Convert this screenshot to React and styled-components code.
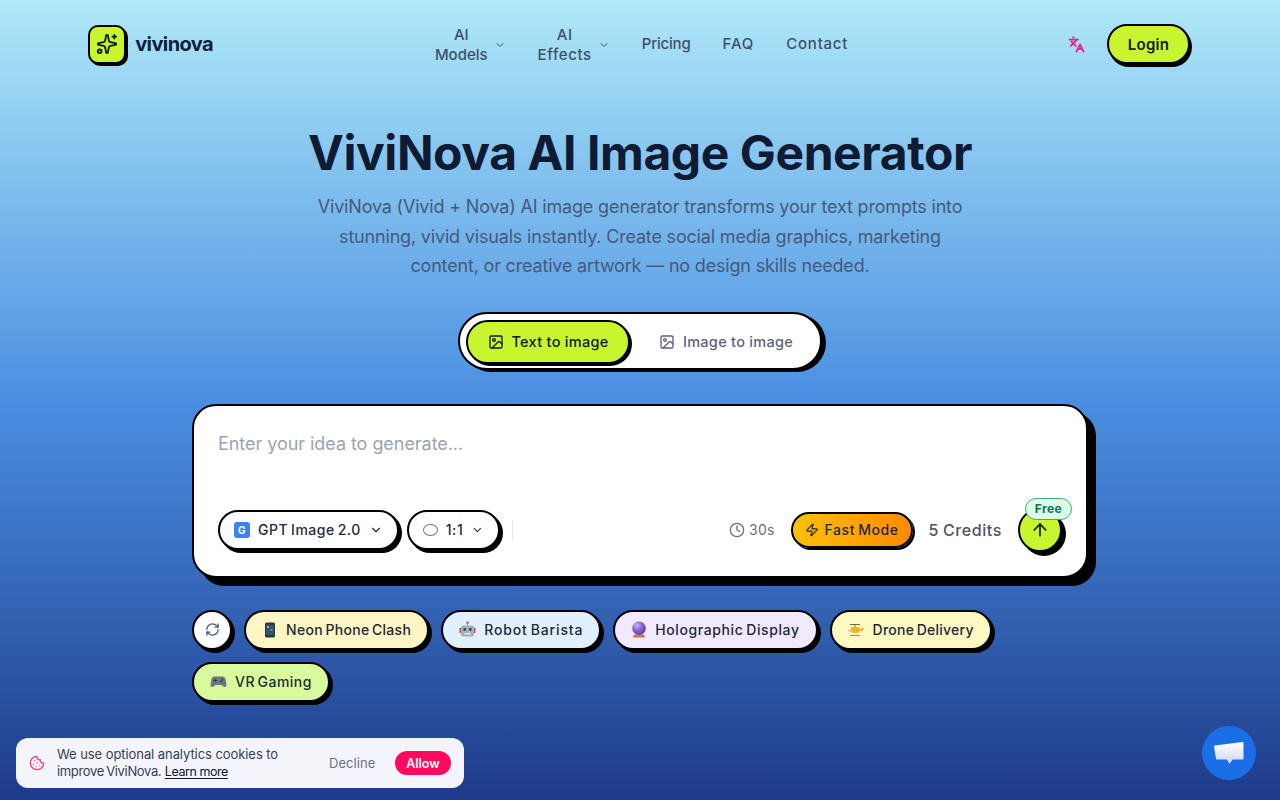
import React from 'react'
import styled, { createGlobalStyle } from 'styled-components'
import { Sparkles, Languages, ChevronDown, Image, Clock, Zap, ArrowUp, RefreshCw, Cookie } from 'lucide-react'

const GlobalStyle = createGlobalStyle`
*{ box-sizing: border-box; }
html, body{ margin: 0; padding: 0; height: 100%; }
body{
  font-family: 'Inter', 'Liberation Sans', sans-serif;
  color: #0f172a;
  overflow: hidden;
}
`

const Page = styled.div`
height: 800px;
overflow: hidden;
background: linear-gradient(180deg, #afe8f8 0%, #4a8fe2 50%, #1e3a8a 100%);
`

const Header = styled.header`
height: 88px;
padding: 0 88px;
display: flex;
align-items: center;
justify-content: space-between;
`

const Brand = styled.div`
display: flex;
align-items: center;
gap: 9px;
width: 125px;
`

const LogoBox = styled.div`
width: 40px;
height: 39px;
border-radius: 10px;
border: 2px solid #000;
box-shadow: 2px 2px 0 #000;
background: #c8f52e;
display: flex;
align-items: center;
justify-content: center;
color: #111827;
`

const BrandName = styled.span`
font-size: 20px;
font-weight: 700;
letter-spacing: -0.6px;
color: #0f1f3d;
`

const Nav = styled.nav`
height: 44px;
display: flex;
align-items: center;
gap: 32px;
margin-left: 3px;
`

const NavItem = styled.a`
display: flex;
align-items: center;
gap: 6px;
margin-top: ${props => props.stacked ? '2px' : '0'};
font-size: 15px;
font-weight: 500;
line-height: 20px;
letter-spacing: ${props => props.spread || '0'};
color: #3f5068;
text-align: center;
`

const Actions = styled.div`
display: flex;
align-items: center;
justify-content: flex-end;
gap: 22px;
width: 125px;
`

const LoginButton = styled.button`
width: 83px;
height: 40px;
margin-right: 2px;
border-radius: 999px;
border: 2px solid #000;
box-shadow: 2px 3px 0 #000;
background: #c8f52e;
font: 600 15px 'Inter', sans-serif;
letter-spacing: 0.3px;
color: #111827;
padding: 0;
`

const Hero = styled.section`
display: flex;
flex-direction: column;
align-items: center;
padding-top: 33px;
`

const Title = styled.h1`
margin: 0;
font-size: 48px;
line-height: 64px;
font-weight: 700;
letter-spacing: -0.42px;
color: #0f1b33;
`

const Lead = styled.p`
margin: 7px 0 0;
width: 672px;
text-align: center;
font-size: 18px;
line-height: 29.5px;
font-weight: 400;
letter-spacing: -0.18px;
color: #46597a;
`

const Tabs = styled.div`
margin-top: 31px;
width: 364px;
height: 58px;
padding: 6px 6px 4px;
border-radius: 999px;
border: 2px solid #000;
box-shadow: 4px 2px 0 #000;
background: #fff;
display: flex;
align-items: flex-start;
gap: 8px;
`

const Tab = styled.button`
height: 44px;
flex: ${props => props.active ? '0 0 164px' : '1'};
display: flex;
align-items: center;
justify-content: center;
gap: 8px;
padding: 0;
border-radius: 999px;
border: ${props => props.active ? '2px solid #000' : '2px solid transparent'};
box-shadow: ${props => props.active ? '2px 2px 0 #000' : 'none'};
background: ${props => props.active ? '#c8f52e' : 'transparent'};
color: ${props => props.active ? '#111827' : '#5b6475'};
font: 500 14.5px 'Inter', sans-serif;
letter-spacing: 0.28px;
`

const Card = styled.div`
margin: 34px auto 0;
width: 896px;
height: 174px;
padding: 24px;
border-radius: 24px;
border: 2px solid #000;
box-shadow: 8px 8px 0 #000;
background: #fff;
display: flex;
flex-direction: column;
justify-content: space-between;
`

const Prompt = styled.div`
font-size: 18px;
line-height: 28px;
letter-spacing: -0.05px;
color: #9ca3af;
`

const Controls = styled.div`
display: flex;
align-items: center;
gap: 8px;
`

const Select = styled.button`
height: 40px;
padding: 0 14px;
width: ${props => props.w}px;
display: flex;
align-items: center;
gap: 8px;
border-radius: 999px;
border: 2px solid #000;
box-shadow: 3px 3px 0 #000;
background: #fff;
font: 500 14px 'Inter', sans-serif;
letter-spacing: 0.55px;
word-spacing: -1.5px;
color: #1f2937;
`

const GBadge = styled.span`
width: 16px;
height: 16px;
border-radius: 3px;
background: #3b82f6;
color: #fff;
font-size: 10px;
font-weight: 700;
display: flex;
align-items: center;
justify-content: center;
`

const SelectText = styled.span`
flex: 1;
text-align: left;
white-space: nowrap;
`

const Oval = styled.span`
width: 16px;
height: 12px;
border-radius: 50%;
border: 1px solid #6b7280;
`

const Divider = styled.span`
width: 1px;
height: 20px;
background: #e5e7eb;
margin-left: 4px;
`

const Spacer = styled.div`
flex: 1;
`

const Timer = styled.span`
display: flex;
align-items: center;
gap: 4px;
font-size: 14px;
letter-spacing: 0.2px;
color: #6b7280;
margin-right: 8px;
`

const FastMode = styled.span`
width: 122px;
height: 36px;
display: flex;
align-items: center;
justify-content: center;
gap: 6px;
border-radius: 999px;
border: 2px solid #000;
box-shadow: 2px 2px 0 #000;
background: linear-gradient(90deg, #ffc107, #ff8a00);
font-size: 14px;
font-weight: 500;
letter-spacing: 0.55px;
word-spacing: -1px;
color: #1f2937;
`

const Credits = styled.span`
margin-left: 8px;
font-size: 16px;
font-weight: 500;
letter-spacing: 0.6px;
word-spacing: -1px;
color: #4b5563;
`

const SendWrap = styled.div`
position: relative;
margin-left: 8px;
`

const SendButton = styled.button`
width: 44px;
height: 44px;
padding: 0;
border-radius: 50%;
border: 2px solid #000;
box-shadow: 4px 4px 0 #000;
background: #c8f52e;
display: flex;
align-items: center;
justify-content: center;
color: #111827;
`

const FreeBadge = styled.span`
position: absolute;
top: -10px;
left: 7px;
width: 47px;
height: 22px;
border-radius: 999px;
border: 1px solid #34b27b;
background: #dcfce7;
color: #047857;
font-size: 12px;
font-weight: 700;
letter-spacing: 0.4px;
display: flex;
align-items: center;
justify-content: center;
`

const Chips = styled.div`
margin: 32px auto 0;
width: 896px;
display: flex;
flex-wrap: wrap;
gap: 12px;
`

const RoundChip = styled.button`
width: 40px;
height: 40px;
padding: 0;
border-radius: 50%;
border: 2px solid #000;
box-shadow: 3px 3px 0 #000;
background: #fff;
display: flex;
align-items: center;
justify-content: center;
color: #4b5563;
`

const Chip = styled.button`
height: 40px;
padding: 0 16px;
display: flex;
align-items: center;
gap: 8px;
border-radius: 999px;
border: 2px solid #000;
box-shadow: 3px 3px 0 #000;
background: ${props => props.bg};
font: 500 14px 'Inter', sans-serif;
letter-spacing: ${props => props.spread};
word-spacing: -1.5px;
color: #1f2937;
white-space: nowrap;
`

const CookieBar = styled.div`
position: fixed;
left: 16px;
bottom: 12px;
width: 448px;
height: 50px;
padding: 0 13px;
border-radius: 12px;
background: #f3f5fb;
display: flex;
align-items: center;
color: #f43f7a;
`

const CookieText = styled.p`
margin: 0 0 0 12px;
width: 259px;
font-size: 13px;
line-height: 17px;
letter-spacing: -0.07px;
color: #374151;
`

const TightLine = styled.span`
letter-spacing: -0.35px;
word-spacing: -1px;
`

const LearnMore = styled.a`
color: #111827;
font-size: 12.5px;
letter-spacing: -0.45px;
text-decoration: underline;
text-underline-offset: 2px;
`

const Decline = styled.span`
margin-left: 13px;
font-size: 13px;
letter-spacing: 0.05px;
color: #6b7280;
`

const Allow = styled.button`
margin-left: auto;
width: 56px;
height: 24px;
padding: 0;
border: none;
border-radius: 999px;
background: #ff0a5c;
color: #fff;
font: 600 12.5px 'Inter', sans-serif;
`

const ChatButton = styled.div`
position: fixed;
left: 1202px;
top: 726px;
width: 54px;
height: 54px;
border-radius: 50%;
background: #1b6fe6;
display: flex;
align-items: center;
justify-content: center;
`

const PhoneIcon = () => (
  <svg width="16" height="16" viewBox="0 0 16 16">
    <rect x="3" y="0.5" width="10" height="15" rx="1.5" fill="#2b3440" />
    <rect x="4" y="2.5" width="8" height="10.5" fill="#35536b" />
    <rect x="5" y="4" width="2" height="2" fill="#e0a030" />
    <rect x="8.5" y="7" width="2" height="2" fill="#4a9bd0" />
  </svg>
)

const RobotIcon = () => (
  <svg width="17" height="17" viewBox="0 0 17 17">
    <rect x="0.5" y="7" width="2" height="5" fill="#d9453d" />
    <rect x="14.5" y="7" width="2" height="5" fill="#d9453d" />
    <circle cx="8.5" cy="1.8" r="1.3" fill="#d9453d" />
    <rect x="8" y="2.5" width="1" height="2.5" fill="#8a9aa5" />
    <rect x="2" y="4.5" width="13" height="11" rx="2" fill="#9fb1bc" />
    <circle cx="5.7" cy="8.5" r="1.4" fill="#3a4750" />
    <circle cx="11.3" cy="8.5" r="1.4" fill="#3a4750" />
    <rect x="5.5" y="12" width="6" height="1.5" fill="#e4ebef" />
  </svg>
)

const BallIcon = () => (
  <svg width="16" height="17" viewBox="0 0 16 17">
    <defs>
      <radialGradient id="ball" cx="0.35" cy="0.3" r="0.8">
        <stop offset="0" stopColor="#c9b5f5" />
        <stop offset="0.5" stopColor="#8a5cd6" />
        <stop offset="1" stopColor="#5b34a8" />
      </radialGradient>
    </defs>
    <path d="M3 13.5h10l1 3H2z" fill="#c4793e" />
    <circle cx="8" cy="7.2" r="6.8" fill="url(#ball)" />
  </svg>
)

const DroneIcon = () => (
  <svg width="17" height="14" viewBox="0 0 17 14">
    <rect x="2" y="1" width="10" height="1" fill="#7a6a30" />
    <rect x="6.5" y="1.5" width="1" height="3" fill="#7a6a30" />
    <path d="M3 4h6c2 0 3 1.5 3 3 0 2-1.5 3-3.5 3H6C4 10 3 8 3 7z" fill="#f0b429" />
    <path d="M11 6l5-1.5L15 8l-4 0z" fill="#f0b429" />
    <path d="M0 8l2-1 1 1.5z" fill="#9a7a20" />
    <rect x="2" y="12" width="10" height="1" fill="#c08a1a" />
  </svg>
)

const PadIcon = () => (
  <svg width="17" height="14" viewBox="0 0 17 14">
    <path d="M4.5 1.5h8c1.8 0 2.6 1 3 2.5l1 5.5c.3 2-1.8 3.3-3.2 2L11.5 10h-6l-1.8 1.5c-1.4 1.3-3.5 0-3.2-2l1-5.5c.4-1.5 1.2-2.5 3-2.5z" fill="#6b7884" />
    <rect x="3.5" y="5" width="3.5" height="1" fill="#2f3740" />
    <rect x="4.75" y="3.75" width="1" height="3.5" fill="#2f3740" />
    <circle cx="12.5" cy="4.5" r="0.9" fill="#2f3740" />
    <circle cx="11" cy="6.5" r="0.9" fill="#2f3740" />
  </svg>
)

const ChatIcon = () => (
  <svg width="32" height="26" viewBox="0 0 32 26">
    <defs>
      <linearGradient id="chat" x1="0" y1="0" x2="0" y2="1">
        <stop offset="0" stopColor="#ffffff" />
        <stop offset="1" stopColor="#cdd6ee" />
      </linearGradient>
    </defs>
    <path d="M2 5.5 29.5 2c.6 0 1 .4 1 1v15.5c0 .6-.4 1-1 1H19.5L16.5 24l-2.500-4.500H4c-.6 0-1-.4-1-1L1 6.500c0-.6.4-1 1-1z" fill="url(#chat)" />
  </svg>
)

const App = () => {
  return (
    <Page>
      <GlobalStyle />
      <Header>
        <Brand>
          <LogoBox><Sparkles size={22} strokeWidth={2} /></LogoBox>
          <BrandName>vivinova</BrandName>
        </Brand>
        <Nav>
          <NavItem stacked><span>AI<br />Models</span><ChevronDown size={12} /></NavItem>
          <NavItem stacked spread="0.6px"><span>AI<br />Effects</span><ChevronDown size={12} /></NavItem>
          <NavItem spread="-0.2px">Pricing</NavItem>
          <NavItem spread="0.9px">FAQ</NavItem>
          <NavItem spread="0.75px">Contact</NavItem>
        </Nav>
        <Actions>
          <Languages size={17} strokeWidth={2.5} color="#e91e8c" />
          <LoginButton>Login</LoginButton>
        </Actions>
      </Header>
      <Hero>
        <Title>ViviNova AI Image Generator</Title>
        <Lead>
          ViviNova (Vivid + Nova) AI image generator transforms your text prompts into stunning, vivid visuals instantly. Create social media graphics, marketing content, or creative artwork — no design skills needed.
        </Lead>
        <Tabs>
          <Tab active><Image size={16} />Text to image</Tab>
          <Tab><Image size={16} />Image to image</Tab>
        </Tabs>
      </Hero>
      <Card>
        <Prompt>Enter your idea to generate...</Prompt>
        <Controls>
          <Select w={181}>
            <GBadge>G</GBadge>
            <SelectText>GPT Image 2.0</SelectText>
            <ChevronDown size={14} />
          </Select>
          <Select w={93}>
            <Oval />
            <SelectText>1:1</SelectText>
            <ChevronDown size={14} />
          </Select>
          <Divider />
          <Spacer />
          <Timer><Clock size={16} />30s</Timer>
          <FastMode><Zap size={14} />Fast Mode</FastMode>
          <Credits>5 Credits</Credits>
          <SendWrap>
            <SendButton><ArrowUp size={20} /></SendButton>
            <FreeBadge>Free</FreeBadge>
          </SendWrap>
        </Controls>
      </Card>
      <Chips>
        <RoundChip><RefreshCw size={15} /></RoundChip>
        <Chip bg="#fdf5c4" spread="0.3px"><PhoneIcon />Neon Phone Clash</Chip>
        <Chip bg="#e0f0ff" spread="0.85px"><RobotIcon />Robot Barista</Chip>
        <Chip bg="#f1e9ff" spread="0.6px"><BallIcon />Holographic Display</Chip>
        <Chip bg="#fef9c3" spread="0.25px"><DroneIcon />Drone Delivery</Chip>
        <Chip bg="#d9f99d" spread="0.45px"><PadIcon />VR Gaming</Chip>
      </Chips>
      <CookieBar>
        <Cookie size={16} />
        <CookieText>We use optional analytics cookies to <TightLine>improve ViviNova.</TightLine> <LearnMore>Learn more</LearnMore></CookieText>
        <Decline>Decline</Decline>
        <Allow>Allow</Allow>
      </CookieBar>
      <ChatButton><ChatIcon /></ChatButton>
    </Page>
  )
}

export default App
